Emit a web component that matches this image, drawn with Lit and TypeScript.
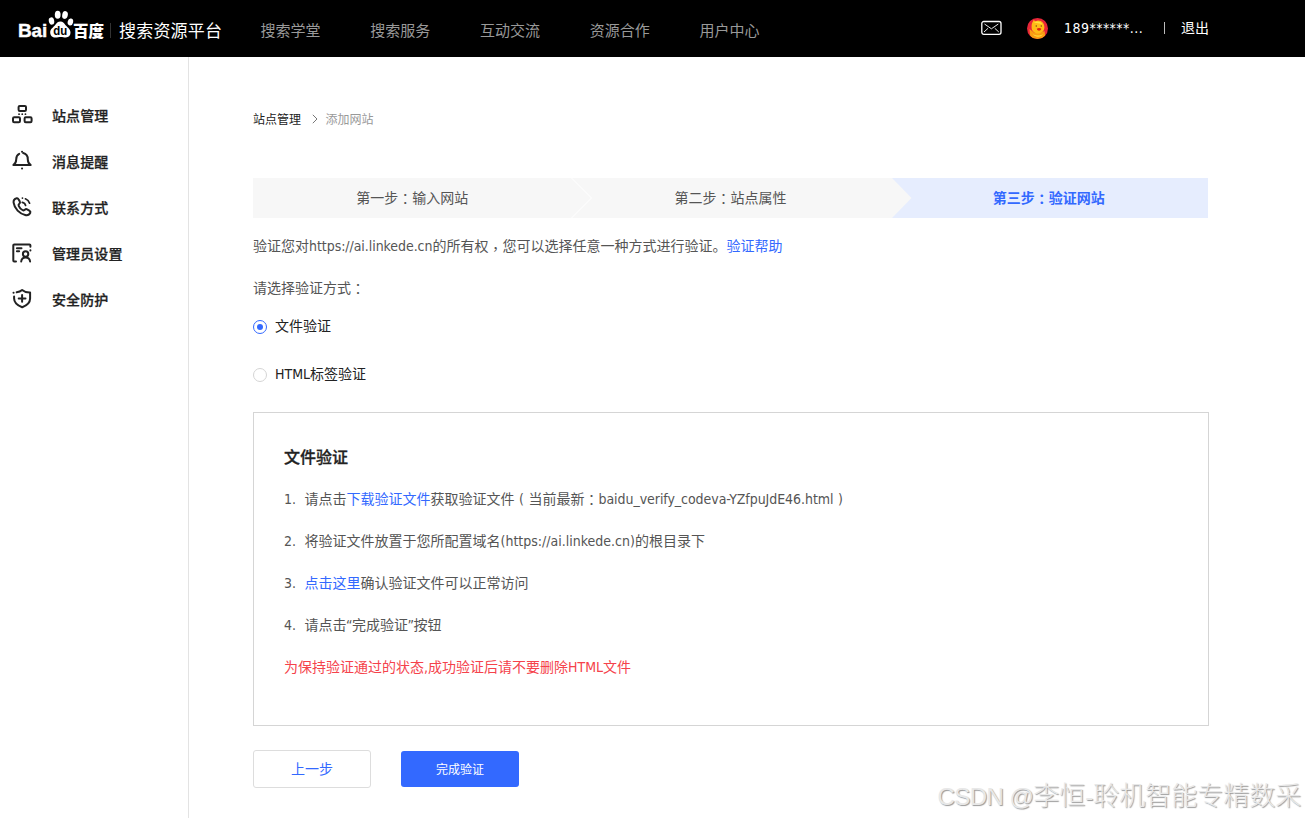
import { LitElement, html, css, svg } from "lit";
import { customElement, state } from "lit/decorators.js";

const stroke = (body: unknown) => html`<svg class="icon" viewBox="0 0 22 22" width="22" height="22" fill="none" stroke="#222" stroke-width="2" stroke-linecap="round" stroke-linejoin="round">${body}</svg>`;

const icons = {
  sites: stroke(svg`<rect x="7.6" y="1.9" width="7.400" height="5" rx="1.2"/><rect x="2" y="13.2" width="7" height="5" rx="1.2"/><rect x="13.600" y="13.2" width="7" height="5" rx="1.2"/><path d="M8 10.2h.1M11.2 10.2h.1M14.4 10.2h.1" stroke-width="1.700"/>`),
  bell: stroke(svg`<path d="M8.2 3.8C5.6 5 5.2 7.3 5.2 9.4c0 3-.6 4-2.9 5.6h17.4c-2.300-1.600-2.900-2.600-2.900-5.600 0-3.600-1.800-5.700-4.600-6.300"/><path d="M11 1.700h.1M11 18.500h.1"/>`),
  phone: stroke(svg`<path d="M5.700 2.200C4 2.600 2.300 4.300 2.600 6.700c.8 6 6 11 11.600 12.300 2.300.5 4.300-.6 5.100-2.300.4-.9-.2-1.600-1-2.100l-2.200-1.300c-.9-.5-1.600-.2-2.200.4-.8.900-1.500.9-2.500.3-1.800-1.100-2.900-2.400-3.700-4.200-.4-.9-.2-1.500.6-2.100.8-.600.9-1.300.5-2.100L7.500 3.200c-.4-.8-1-1.200-1.800-1Z"/><path d="M11.300 6.400c1.700.3 2.900 1.500 3.300 3.100M14.400 2.800c2 .8 3.500 2.300 4.200 4.400M11.400 2.100h.1" stroke-width="1.700"/>`),
  admin: stroke(svg`<path d="M5 19.500H3.200a.9.900 0 0 1-.9-.9V3.300c0-.5.400-.9.900-.9h15.300c.5 0 .9.400.9.900v1.500M5.900 6.300h4.600M5.900 9.300h2.200M19.400 8.300v.1"/><circle cx="14.600" cy="12" r="2.700"/><path d="M10.200 19.500c.3-2.500 1.700-4 4.400-4s4.200 1.500 4.500 4"/>`),
  shield: stroke(svg`<path d="M5.700 4.300c2.200-.3 3.900-1 5.400-2.300 2 1.700 4.800 2.600 8 2.500v5.900c0 4.200-3.200 7-7.900 8.900-4.900-2-8.100-4.600-8.100-8.900V8.600"/><path d="M11.100 7v6.800M7.700 10.400h6.800M2.500 4.700h.1"/>`),
};

const paw = html`<svg class="paw" viewBox="0 0 26 28" width="26" height="28" fill="#fff">
  <ellipse cx="3.500" cy="11" rx="2.700" ry="3.700" transform="rotate(-12 3.500 11)"/>
  <ellipse cx="9.700" cy="4.800" rx="2.900" ry="4"/>
  <ellipse cx="17" cy="5" rx="2.800" ry="3.900" transform="rotate(12 17 5)"/>
  <ellipse cx="22.400" cy="12" rx="2.700" ry="3.500" transform="rotate(14 22.400 12)"/>
  <path d="M12.500 11.500c2.300 0 3.500 1.600 4.700 3.300 1.500 2.200 5.300 3.800 5.300 8 0 3.100-2.100 4.600-4.600 4.600-2 0-3.300-.5-5.200-.5s-3.200.6-5.300.6c-3 0-5.200-2-5.200-5 0-3.600 3.400-5.100 5-7.400 1.200-1.800 2.700-3.600 5.300-3.600Z"/>
  <text x="12.300" y="24.600" text-anchor="middle" font-family="Liberation Sans" font-weight="700" font-size="13.500" fill="#000" textLength="14" lengthAdjust="spacingAndGlyphs">du</text>
</svg>`;

const colon = html`<span class="tc">：</span>`;

@customElement("app-root")
export class AppRoot extends LitElement {
  @state() private method = 0;

  static styles = css`
    :host { display: block; position: relative; height: 818px; overflow: hidden; background: #fff; color: #555; font: 14px/20px "DejaVu Sans Condensed", "Noto Sans CJK SC", sans-serif; }
    * { box-sizing: border-box; }
    a { color: #3369ff; text-decoration: none; }
    .tc { font-family: "Noto Sans CJK TC", sans-serif; line-height: 0; vertical-align: -1px; }
    .comma { font-family: "Noto Sans CJK TC", sans-serif; line-height: 0; vertical-align: -3px; }
    .latin { letter-spacing: -.055px; }
    .latin.domain { letter-spacing: 0; }
    .header { height: 57px; background: #000; color: #fff; display: flex; padding-left: 18px; }
    .logo { display: flex; width: 242.600px; padding-top: 10px; height: 57px; }
    .bai { font: 700 19px/41px "Liberation Sans"; width: 29px; letter-spacing: -.2px; -webkit-text-stroke: .4px #fff; }
    .paw { display: block; margin: 0 0 0 1px; }
    .du { font: 900 15.500px/40px "Noto Sans CJK SC"; width: 31px; margin-left: -1px; white-space: nowrap; }
    .rule { width: 1px; height: 15px; background: #333; margin: 13px 8px 0 6px; }
    .product { font: 17px/40px "Noto Sans CJK SC"; letter-spacing: .2px; white-space: nowrap; }
    .nav { display: flex; gap: 49.700px; font-size: 15px; line-height: 62px; color: #999; white-space: nowrap; }
    .user { display: flex; align-items: center; height: 56px; margin-left: auto; padding-right: 96px; white-space: nowrap; }
    .mail { margin-right: 25px; }
    .avatar { margin-right: 16px; }
    .account { width: 100px; letter-spacing: .45px; }
    .bar { width: 1px; height: 12px; background: #bbb; margin-right: 16px; }
    .body { display: flex; height: 761px; }
    .side { width: 189px; border-right: 1px solid #e3e3e3; padding: 36px 0 0 11px; }
    .entry { display: flex; align-items: center; height: 46px; color: #222; font-weight: 500; letter-spacing: .1px; -webkit-text-stroke: .25px #222; }
    .icon { margin: 0 19px 2px 0; display: block; }
    .main { width: 1020px; padding: 52px 0 0 64px; }
    .crumbs { display: flex; align-items: center; height: 21px; font-size: 12px; color: #222; }
    .chevron { margin: 0 7.500px 1px 11px; }
    .current { color: #999; }
    .steps { display: grid; grid-template-columns: repeat(3, 1fr); width: 955px; height: 40px; margin-top: 48px; background: #f7f7f7; line-height: 40px; text-align: center; }
    .step { position: relative; }
    .step.active { background: #e6edfe; color: #3369ff; font-weight: 700; }
    .arrow { position: absolute; left: 0; top: 0; display: block; }
    .intro { margin-top: 18px; height: 20px; }
    .ask { margin-top: 22px; height: 20px; }
    .radio { display: flex; align-items: center; height: 20px; margin-top: 18px; color: #222; }
    .radio + .radio { margin-top: 28px; }
    .dot { width: 14px; height: 14px; margin: 2px 8px 0 0; border: 1px solid #d5d5d5; border-radius: 50%; display: grid; place-items: center; }
    .dot.on { border-color: #3369ff; }
    .dot.on::after { content: ""; width: 6px; height: 6px; border-radius: 50%; background: #3369ff; }
    .panel { width: 956px; height: 314px; margin-top: 28px; padding: 33px 30px; border: 1px solid #d5d5d5; }
    .title { font-size: 16px; line-height: 24px; font-weight: 500; color: #222; -webkit-text-stroke: .3px #222; }
    .line { display: flex; height: 20px; line-height: 20px; margin-top: 22px; white-space: pre; }
    .title + .line { margin-top: 19px; }
    .num { width: 20.500px; }
    .quote { margin: 0 -.5px; }
    .warn { color: #f5424b; }
    .mid { display: inline-block; width: 14px; text-align: center; }
    .actions { display: flex; align-items: center; gap: 30px; margin-top: 24px; height: 38px; }
    .btn { width: 118px; height: 38px; border: 1px solid #ddd; border-radius: 3px; display: grid; place-items: center; color: #3369ff; background: #fff; }
    .btn.primary { height: 36px; border: 0; padding-top: 1px; background: #3369ff; color: #fff; font-size: 12px; }
    .mark { position: absolute; left: 937.500px; top: 774px; font: 300 26px/40px "Noto Sans CJK SC", sans-serif; color: #e8e8e8; text-shadow: 1px 1px 1px #999; white-space: nowrap; }
    .mark-latin { font: 24px/1 "Liberation Sans", sans-serif; }
    .mark-latin.name { letter-spacing: -.55px; }
  `;

  private entries = [
    [icons.sites, "站点管理"], [icons.bell, "消息提醒"], [icons.phone, "联系方式"],
    [icons.admin, "管理员设置"], [icons.shield, "安全防护"],
  ];

  render() {
    return html`
      <header class="header">
        <div class="logo"><span class="bai">Bai</span>${paw}<span class="du">百度</span><i class="rule"></i><span class="product">搜索资源平台</span></div>
        <nav class="nav">${["搜索学堂", "搜索服务", "互动交流", "资源合作", "用户中心"].map((t) => html`<span>${t}</span>`)}</nav>
        <div class="user">
          <svg class="mail" width="21" height="16" viewBox="0 0 21 16" fill="none" stroke="#fff"><rect x=".8" y="1.500" width="19.200" height="12.800" rx="2" stroke-width="1.300"/><path d="m3.500 4 6.900 4.800L17.300 4M3 12l4-3.700M17.800 12l-4-3.700" stroke-width=".9"/></svg>
          <svg class="avatar" width="21" height="21" viewBox="0 0 21 21"><defs><clipPath id="c"><circle cx="10.500" cy="10.500" r="10.500"/></clipPath></defs><g clip-path="url(#c)"><path fill="#e72638" d="M0 0h21v21H0z"/><path fill="#fa9d12" d="M2.500 11 7 14.500h7l3.500-1.500.7 4.500-3 3.500H5l-2-4z"/><path fill="#ffbc16" d="M6 3.500 6.500 2l2 1.200L11 2.500c4 0 6.600 3.300 6.400 7-.2 3.500-2.700 6-6.300 6s-6.500-2.500-6.500-6C4.600 7 4.700 5 6 3.500Z"/><path fill="#ffe33b" d="M7 4.500c3-2 7-1 8.500 2-3-1.500-6-1-8.500-2ZM6 16c3 2 7 2 10 0-1 3-8 4-10 0Z"/><circle cx="9.300" cy="8" r=".8" fill="#805010"/><circle cx="14.300" cy="8" r=".8" fill="#805010"/><path fill="#e4200f" d="M9.800 10.800c1-1.200 3.600-1.200 4.500 0-.5 2.500-3.800 2.800-4.500 0Z"/></g></svg>
          <span class="account">189******...</span><i class="bar"></i><span>退出</span>
        </div>
      </header>
      <div class="body">
        <aside class="side">${this.entries.map(([i, t]) => html`<div class="entry">${i}<span>${t}</span></div>`)}</aside>
        <main class="main">
          <div class="crumbs"><span>站点管理</span><svg class="chevron" width="6" height="10" viewBox="0 0 6 10" fill="none" stroke="#777"><path d="m.8.800 4.200 4.200L.8 9.200"/></svg><span class="current">添加网站</span></div>
          <div class="steps">
            <div class="step">第一步${colon}输入网站</div>
            <div class="step"><svg class="arrow" width="22" height="40"><path d="m.5 0 20 20-20 20" fill="#f7f7f7" stroke="#fff"/></svg>第二步${colon}站点属性</div>
            <div class="step active"><svg class="arrow" width="22" height="40"><path d="M0 0h2l19.500 20L2 40H0z" fill="#f7f7f7"/></svg>第三步${colon}验证网站</div>
          </div>
          <div class="intro">验证您对<span class="latin">https://ai.linkede.cn</span>的所有权<span class="comma">，</span>您可以选择任意一种方式进行验证。<a>验证帮助</a></div>
          <div class="ask">请选择验证方式${colon}</div>
          ${["文件验证", "HTML标签验证"].map((t, i) => html`<div class="radio" @click=${() => (this.method = i)}><i class="dot ${this.method === i ? "on" : ""}"></i><span>${t}</span></div>`)}
          <section class="panel">
            <div class="title">文件验证</div>
            <div class="line"><span class="num">1.</span><span>请点击<a>下载验证文件</a>获取验证文件<span class="mid">(</span>当前最新${colon}<span class="latin">baidu_verify_codeva-YZfpuJdE46.html</span><span class="mid">)</span></span></div>
            <div class="line"><span class="num">2.</span><span>将验证文件放置于您所配置域名<span class="latin domain">(https://ai.linkede.cn)</span>的根目录下</span></div>
            <div class="line"><span class="num">3.</span><span><a>点击这里</a>确认验证文件可以正常访问</span></div>
            <div class="line"><span class="num">4.</span><span>请点击<span class="quote">“</span>完成验证<span class="quote">”</span>按钮</span></div>
            <div class="line warn">为保持验证通过的状态,成功验证后请不要删除HTML文件</div>
          </section>
          <div class="actions"><span class="btn">上一步</span><span class="btn primary">完成验证</span></div>
        </main>
      </div>
      <div class="mark"><span class="mark-latin name">CSDN @</span>李恒<span class="mark-latin">-</span>聆机智能专精数采</div>
    `;
  }
}
